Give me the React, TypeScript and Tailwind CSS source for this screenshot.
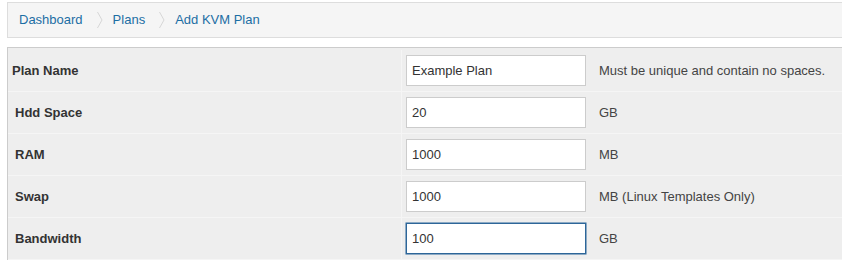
import React from 'react';

const rows = [
  { label: 'Plan Name', value: 'Example Plan', help: 'Must be unique and contain no spaces.', pad: 'pl-[4px]' },
  { label: 'Hdd Space', value: '20', help: 'GB', pad: 'pl-[7px]' },
  { label: 'RAM', value: '1000', help: 'MB', pad: 'pl-[7px]' },
  { label: 'Swap', value: '1000', help: 'MB (Linux Templates Only)', pad: 'pl-[7px]' },
  { label: 'Bandwidth', value: '100', help: 'GB', pad: 'pl-[7px]', focused: true },
];

function Chevron() {
  return (
    <svg width="6" height="18" viewBox="0 0 6 18" className="shrink-0">
      <polyline points="0.5,1 5,9 0.5,17" fill="none" stroke="#d6d6d6" strokeWidth="1" />
    </svg>
  );
}

export default function App() {
  return (
    <div className="min-h-screen bg-white pt-[2px] pl-[7px] overflow-hidden text-[13px] font-['Liberation_Sans',Arial,sans-serif]">
      <div className="h-[36px] flex items-center border border-r-0 border-[#dddddd] bg-[#f5f5f5] pl-[11px] text-[#1c6ea4]">
        <span>Dashboard</span>
        <span className="ml-[14px] mr-[10px] flex items-center"><Chevron /></span>
        <span>Plans</span>
        <span className="ml-[14px] mr-[10px] flex items-center"><Chevron /></span>
        <span>Add KVM Plan</span>
      </div>

      <div className="mt-[9px] border-t border-l border-[#cccccc] bg-[#eeeeee] pt-[2px]">
        {rows.map((r) => (
          <div key={r.label} className="flex h-[42px] border-b border-[#f5f5f5]">
            <div className={`w-[394px] shrink-0 flex items-center border-r border-[#f5f5f5] font-bold text-[#333333] ${r.pad}`}>
              {r.label}
            </div>
            <div className="flex items-center pl-[4px]">
              <input
                readOnly
                value={r.value}
                className={`w-[180px] h-[31px] bg-white px-[5px] text-[13px] text-[#333333] outline-none border ${
                  r.focused ? 'border-[#2d6699] shadow-[0_0_0_0.5px_#2d6699]' : 'border-[#cccccc]'
                }`}
              />
              <span className="ml-[13px] text-[#444444]">{r.help}</span>
            </div>
          </div>
        ))}
      </div>
    </div>
  );
}
